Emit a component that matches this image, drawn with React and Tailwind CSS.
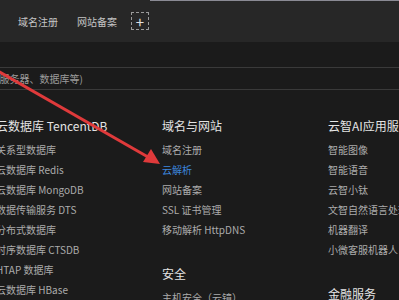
import React from 'react';

const FONT = { fontFamily: '"Noto Sans CJK SC", "Noto Sans", sans-serif' };

const columns = [
  {
    sections: [
      {
        title: '云数据库 TencentDB',
        items: ['关系型数据库', '云数据库 Redis', '云数据库 MongoDB', '数据传输服务 DTS', '分布式数据库', '时序数据库 CTSDB', 'HTAP 数据库', '云数据库 HBase'],
      },
    ],
  },
  {
    sections: [
      { title: '域名与网站', items: ['域名注册', '云解析', '网站备案', 'SSL 证书管理', '移动解析 HttpDNS'], active: '云解析' },
      { title: '安全', items: ['主机安全（云镜）'] },
    ],
  },
  {
    sections: [
      { title: '云智AI应用服务', items: ['智能图像', '智能语音', '云智小钛', '文智自然语言处理', '机器翻译', '小微客服机器人'] },
      { title: '金融服务', items: ['金融云'] },
    ],
  },
];

const App = () => {
  return (
    <div className="relative w-[399px] h-[300px] overflow-hidden bg-[#1b1b1b]" style={FONT}>
      {/* Top nav */}
      <div className="relative h-[42px] bg-[#272727] flex items-center pl-[18px] text-[10px] text-[#c4c4c4]">
        <div className="absolute top-0 left-[150px] right-0 h-px bg-[#8a8a94]" />
        <span>域名注册</span>
        <span className="ml-[19px]">网站备案</span>
        <div className="ml-[14px] w-[18px] h-[18px] border border-dashed border-[#9a9a9a] flex items-center justify-center text-[15px] leading-none text-[#e0e0e0]">
          +
        </div>
      </div>

      {/* Search bar */}
      <div className="mt-[25px] h-[23px] border-y border-[#3a3a3a] flex items-center">
        <span className="-ml-[14px] text-[10px] text-[#9c9c9c] whitespace-nowrap">(云服务器、数据库等)</span>
      </div>

      {/* Product columns */}
      <div className="grid grid-cols-[166px_166px_166px] -ml-[4px] pt-[26px]">
        {columns.map((col, ci) => (
          <div key={ci} className="flex flex-col gap-[24px]">
            {col.sections.map((s) => (
              <div key={s.title}>
                <div className="text-[12px] leading-[20px] text-[#e4e4e4] whitespace-nowrap">{s.title}</div>
                <div className="mt-[4px] flex flex-col">
                  {s.items.map((it) => (
                    <div
                      key={it}
                      className={`text-[10px] leading-[20px] whitespace-nowrap ${
                        it === s.active ? 'text-[#3c86de]' : 'text-[#ababab]'
                      }`}
                    >
                      {it}
                    </div>
                  ))}
                </div>
              </div>
            ))}
          </div>
        ))}
      </div>

      {/* Red annotation arrow */}
      <svg className="absolute inset-0 pointer-events-none" width="399" height="300">
        <line x1="-4" y1="70" x2="148" y2="157" stroke="#df3a3b" strokeWidth="3" />
        <polygon points="160,164 143,162 151,149" fill="#df3a3b" />
      </svg>
    </div>
  );
};

export default App;
